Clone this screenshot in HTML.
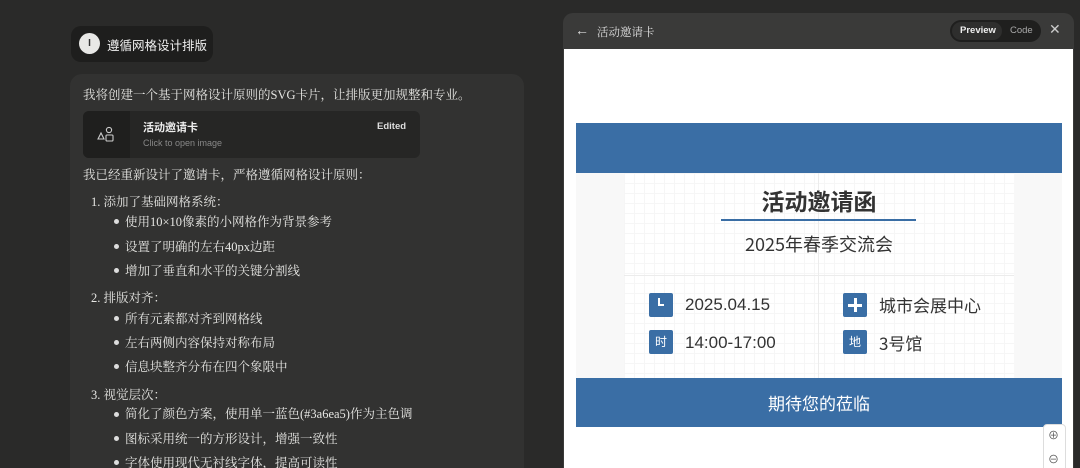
<!DOCTYPE html>
<html><head><meta charset="utf-8"><style>
*{margin:0;padding:0;box-sizing:border-box}
html,body{width:1080px;height:468px;overflow:hidden}
body{background:#2a2a29;position:relative;font-family:"Liberation Serif","Noto Serif CJK SC",serif;color:#e6e6e3}
.a{position:absolute;white-space:nowrap}
.sans{font-family:"Liberation Sans","Noto Sans CJK SC",sans-serif}
.cjk{font-family:"Noto Sans CJK SC",sans-serif}
.t{font-size:12.5px;line-height:16px}
.b{position:absolute;width:5px;height:5px;border-radius:50%;background:#ddd}
</style></head><body>
<div class="a" style="left:71px;top:26px;width:142px;height:36px;background:#1e1e1d;border-radius:10px"></div>
<div class="a" style="left:79px;top:33px;width:21px;height:21px;border-radius:50%;background:#e8e8e6;color:#333;font:bold 10px 'Liberation Sans';text-align:center;line-height:21px">I</div>
<div class="a cjk" style="left:107px;top:35px;font-size:12.5px;color:#eee">遵循网格设计排版</div>
<div class="a" style="left:70px;top:74px;width:454px;height:394px;background:#323231;border-radius:12px 12px 0 0"></div>
<div class="a t" style="left:83px;top:87px">我将创建一个基于网格设计原则的SVG卡片，让排版更加规整和专业。</div>
<div class="a" style="left:83px;top:111px;width:337px;height:47px;background:#262625;border-radius:6px;overflow:hidden"><div style="width:47px;height:47px;background:#1f1f1e"></div></div>
<svg class="a" style="left:97px;top:126px" width="18" height="17" viewBox="0 0 18 17" fill="none" stroke="#ccc" stroke-width="1.1"><path d="M1 13 L4 7 L7 13 Z"/><circle cx="12" cy="4" r="2.6"/><rect x="9" y="9" width="7" height="6" rx="1"/></svg>
<div class="a cjk" style="left:143px;top:119px;font-size:11px;font-weight:bold;color:#eee">活动邀请卡</div>
<div class="a sans" style="left:143px;top:138px;font-size:9px;color:#888">Click to open image</div>
<div class="a sans" style="left:377px;top:121px;font-size:9.5px;font-weight:bold;color:#ddd">Edited</div>
<div class="a t" style="left:83px;top:167px">我已经重新设计了邀请卡，严格遵循网格设计原则：</div>
<div class="a t" style="left:91px;top:194px">1. 添加了基础网格系统：</div>
<div class="b" style="left:114px;top:219px"></div><div class="a t" style="left:125px;top:214px">使用10×10像素的小网格作为背景参考</div>
<div class="b" style="left:114px;top:244px"></div><div class="a t" style="left:125px;top:239px">设置了明确的左右40px边距</div>
<div class="b" style="left:114px;top:268px"></div><div class="a t" style="left:125px;top:263px">增加了垂直和水平的关键分割线</div>
<div class="a t" style="left:91px;top:290px">2. 排版对齐：</div>
<div class="b" style="left:114px;top:316px"></div><div class="a t" style="left:125px;top:311px">所有元素都对齐到网格线</div>
<div class="b" style="left:114px;top:340px"></div><div class="a t" style="left:125px;top:335px">左右两侧内容保持对称布局</div>
<div class="b" style="left:114px;top:364px"></div><div class="a t" style="left:125px;top:359px">信息块整齐分布在四个象限中</div>
<div class="a t" style="left:91px;top:387px">3. 视觉层次：</div>
<div class="b" style="left:114px;top:412px"></div><div class="a t" style="left:125px;top:406px">简化了颜色方案，使用单一蓝色(#3a6ea5)作为主色调</div>
<div class="b" style="left:114px;top:436px"></div><div class="a t" style="left:125px;top:431px">图标采用统一的方形设计，增强一致性</div>
<div class="b" style="left:114px;top:460px"></div><div class="a t" style="left:125px;top:455px">字体使用现代无衬线字体，提高可读性</div>

<div class="a" style="left:563px;top:13px;width:511px;height:455px;background:#3a3a39;border-radius:10px 10px 0 0"></div>
<div class="a sans" style="left:575px;top:22px;font-size:14px;color:#ddd">←</div>
<div class="a" style="left:597px;top:24px;font-size:11.5px;color:#ddd">活动邀请卡</div>
<div class="a" style="left:950px;top:20px;width:91px;height:22px;background:#1f1f1e;border-radius:11px"></div>
<div class="a" style="left:952px;top:22px;width:50px;height:18px;background:#2e2e2d;border-radius:9px"></div>
<div class="a sans" style="left:960px;top:25px;font-size:9.5px;font-weight:bold;color:#eee">Preview</div>
<div class="a sans" style="left:1010px;top:25px;font-size:9.5px;color:#aaa">Code</div>
<div class="a sans" style="left:1049px;top:21px;font-size:14px;color:#ccc">✕</div>
<div class="a" style="left:564px;top:49px;width:509px;height:419px;background:#fff"></div>
<div class="a" style="left:576px;top:123px;width:486px;height:50px;background:#3a6ea5"></div>
<div class="a" style="left:576px;top:173px;width:486px;height:205px;background:#f8f8f8"></div>
<div class="a" style="left:624px;top:173px;width:390px;height:205px;background:#fff;background-image:linear-gradient(#f6f6f6 1px,transparent 1px),linear-gradient(90deg,#f6f6f6 1px,transparent 1px);background-size:10px 10px"></div>
<div class="a" style="left:624px;top:275px;width:390px;height:1px;background:#ececec"></div>
<div class="a" style="left:818px;top:173px;width:1px;height:205px;background:#ececec"></div>
<div class="a cjk" style="left:576px;top:183px;width:486px;text-align:center;font-size:23px;line-height:34px;font-weight:bold;color:#333">活动邀请函</div>
<div class="a" style="left:721px;top:219px;width:195px;height:2px;background:#3a6ea5"></div>
<div class="a cjk" style="left:576px;top:230px;width:486px;text-align:center;font-size:18px;line-height:28px;color:#333">2025年春季交流会</div>
<div class="a" style="left:649px;top:293px;width:24px;height:24px;background:#3a6ea5;border-radius:2px"></div>
<div class="a" style="left:658px;top:298px;width:6px;height:8px;border-left:2px solid #fff;border-bottom:2px solid #fff"></div>
<div class="a" style="left:649px;top:330px;width:24px;height:24px;background:#3a6ea5;border-radius:2px;color:#fff;font:12px 'Noto Sans CJK SC';text-align:center;line-height:24px">时</div>
<div class="a" style="left:843px;top:293px;width:24px;height:24px;background:#3a6ea5;border-radius:2px"></div>
<div class="a" style="left:848px;top:304px;width:14px;height:3px;background:#fff"></div>
<div class="a" style="left:853.5px;top:298px;width:3px;height:14px;background:#fff"></div>
<div class="a" style="left:843px;top:330px;width:24px;height:24px;background:#3a6ea5;border-radius:2px;color:#fff;font:12px 'Noto Sans CJK SC';text-align:center;line-height:24px">地</div>
<div class="a sans" style="left:685px;top:295px;font-size:17px;color:#333">2025.04.15</div>
<div class="a sans" style="left:685px;top:333px;font-size:17px;color:#333">14:00-17:00</div>
<div class="a cjk" style="left:879px;top:292px;font-size:17px;line-height:26px;color:#333">城市会展中心</div>
<div class="a cjk" style="left:879px;top:330px;font-size:17px;line-height:26px;color:#333">3号馆</div>
<div class="a" style="left:576px;top:378px;width:486px;height:49px;background:#3a6ea5"></div>
<div class="a cjk" style="left:576px;top:389px;width:486px;text-align:center;font-size:17px;line-height:28px;color:#fff">期待您的莅临</div>
<div class="a" style="left:1043px;top:424px;width:23px;height:50px;background:#fff;border:1px solid #ddd;border-radius:4px"></div>
<div class="a sans" style="left:1048px;top:427px;font-size:11px;color:#555">⊕</div>
<div class="a sans" style="left:1048px;top:451px;font-size:11px;color:#555">⊖</div>
</body></html>
